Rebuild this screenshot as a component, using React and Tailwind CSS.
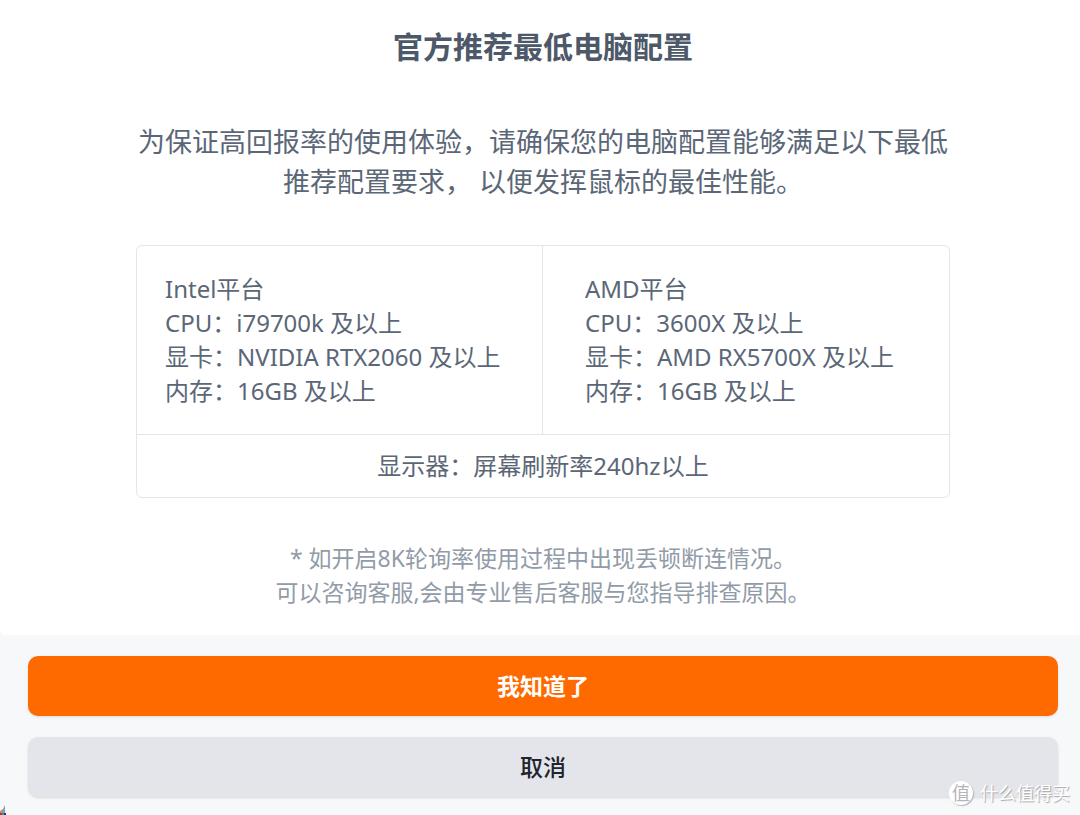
const platforms = [
  {
    name: 'Intel平台',
    specs: ['CPU：i79700k 及以上', '显卡：NVIDIA RTX2060 及以上', '内存：16GB 及以上'],
  },
  {
    name: 'AMD平台',
    specs: ['CPU：3600X 及以上', '显卡：AMD RX5700X 及以上', '内存：16GB 及以上'],
  },
]

function SpecTable() {
  return (
    <table className="w-full table-fixed border-separate border-spacing-0 rounded-md border border-[#e4e5eb] text-2xl leading-[34px]">
      <tbody>
        <tr>
          {platforms.map((platform, i) => (
            <td
              key={platform.name}
              className={i === 0 ? 'border-r border-[#e4e5eb] py-[26px] pl-7 align-top' : 'py-[26px] pl-[42px] align-top'}
            >
              <p>{platform.name}</p>
              {platform.specs.map((spec) => (
                <p key={spec} className="whitespace-nowrap">{spec}</p>
              ))}
            </td>
          ))}
        </tr>
        <tr>
          <td colSpan={2} className="border-t border-[#e4e5eb] py-[14px] text-center">
            显示器：屏幕刷新率240hz以上
          </td>
        </tr>
      </tbody>
    </table>
  )
}

function Watermark() {
  return (
    <div className="absolute right-[10px] bottom-[10px] flex items-center gap-[7px] text-white">
      <span className="flex size-6 items-center justify-center rounded-full bg-white text-lg leading-none text-[#b4b5b9] shadow-[1px_1px_1px_#b4b5b9]">
        值
      </span>
      <span className="text-lg leading-6 [text-shadow:1px_1px_1px_#a5a6aa]">什么值得买</span>
    </div>
  )
}

export default function App() {
  return (
    <div className="relative min-h-screen bg-[#f7f8fa] font-['Noto_Sans','Noto_Sans_CJK_SC',sans-serif] text-[#5b6777]">
      <div className="rounded-bl-md bg-white pt-[27px] pr-[22px] pb-[26px] pl-7 text-center">
        <h1 className="text-3xl leading-10 font-bold text-[#4d5969]">官方推荐最低电脑配置</h1>

        <div className="mx-auto max-w-[814px]">
          <p className="mt-[55px] text-[27px] leading-10 whitespace-nowrap">
            为保证高回报率的使用体验，请确保您的电脑配置能够满足以下最低
            <br />
            推荐配置要求， 以便发挥鼠标的最佳性能。
          </p>

          <div className="mt-[43px] text-left">
            <SpecTable />
          </div>

          <p className="mt-[43px] text-[23px] leading-[34px] text-[#929ba8]">
            * 如开启8K轮询率使用过程中出现丢顿断连情况。
            <br />
            可以咨询客服,会由专业售后客服与您指导排查原因。
          </p>
        </div>
      </div>

      <div className="flex flex-col gap-[21px] pt-[21px] pr-[22px] pb-[18px] pl-7">
        <button className="h-[60px] rounded-[10px] bg-[#ff6a00] text-[23px] font-bold text-white shadow-sm">
          我知道了
        </button>
        <button className="h-[60px] rounded-[10px] bg-[#e4e5ea] text-[23px] font-medium text-[#20242c] shadow-sm">
          取消
        </button>
      </div>

      <Watermark />

      {/* resize mark in the corner */}
      <svg className="absolute bottom-0 left-0" width="7" height="10" viewBox="0 0 7 10" aria-hidden="true">
        <path d="M5 0v8H0V6l3-2z" fill="#999" />
        <path d="M0 8h2v2H0z" fill="#d22" />
        <path d="M2 8h2v2H2z" fill="#1b3" />
        <path d="M4 8h2v2H4z" fill="#22d" />
      </svg>
    </div>
  )
}
